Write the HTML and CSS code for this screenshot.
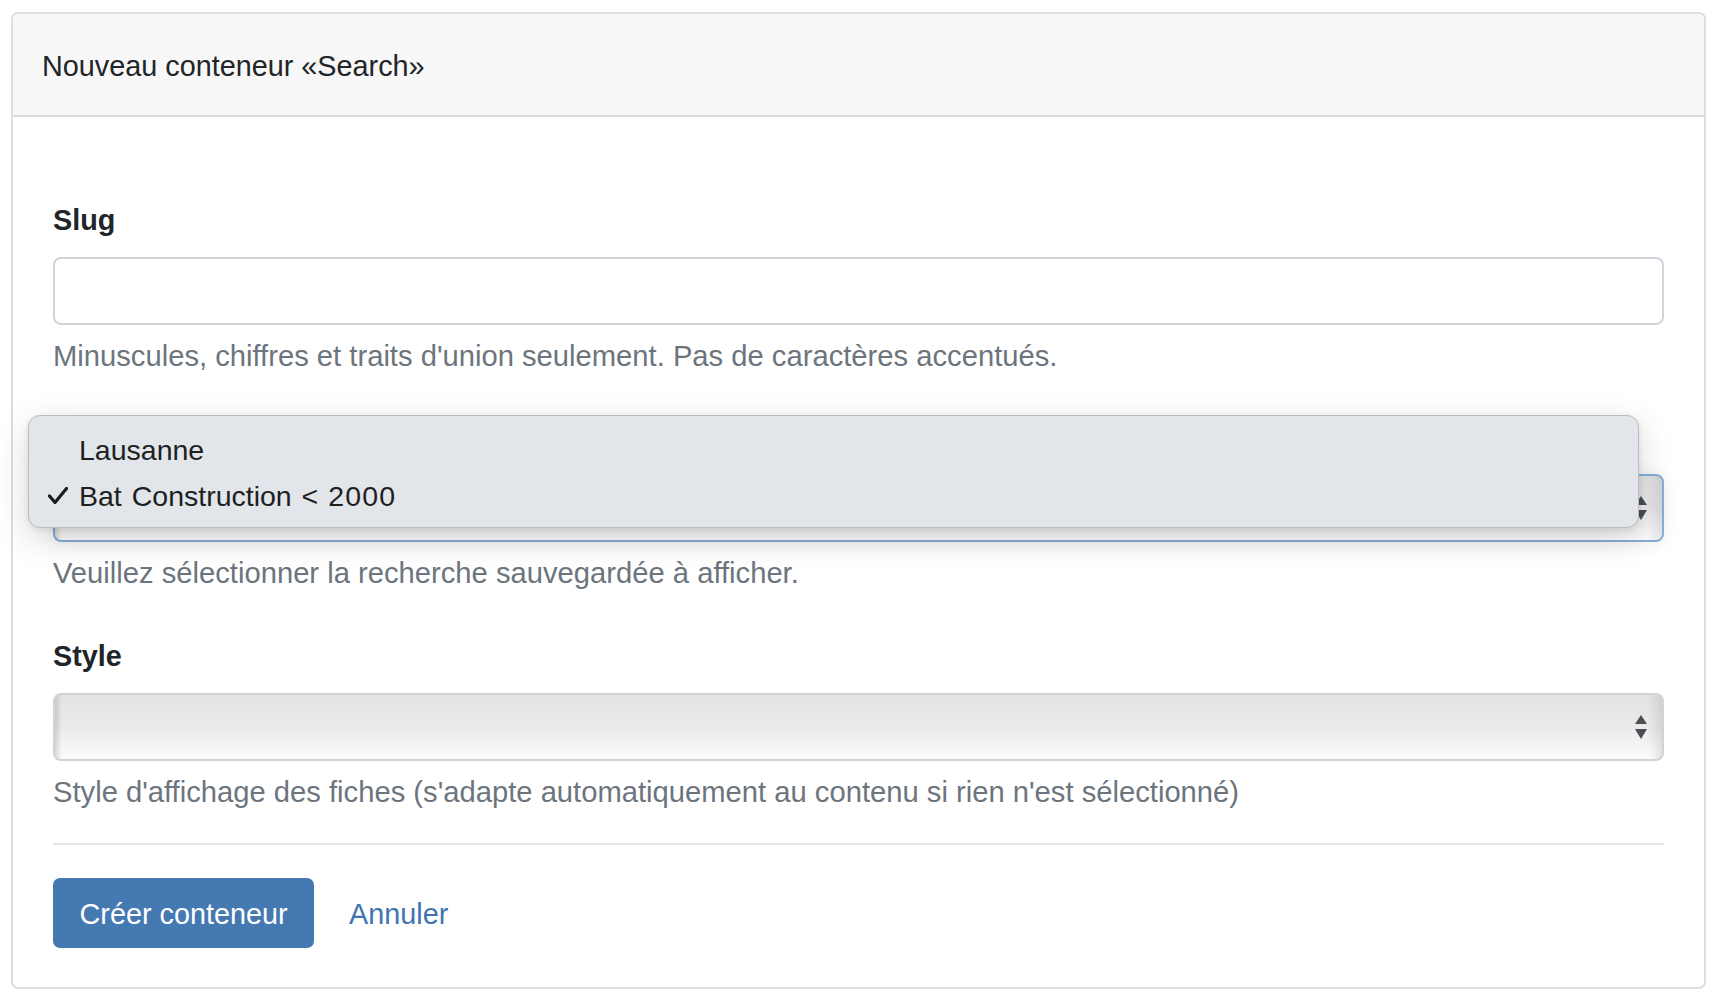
FILE: index.html
```html
<!DOCTYPE html>
<html lang="fr">
<head>
<meta charset="utf-8">
<title>Nouveau conteneur «Search»</title>
<link rel="stylesheet" href="styles.css">
</head>
<body>
<div class="card">
  <div class="card-header">Nouveau conteneur «Search»</div>
  <div class="card-body">
    <form class="form">
      <div class="group">
        <label class="label" for="slug">Slug</label>
        <input class="control" id="slug" type="text">
        <div class="help">Minuscules, chiffres et traits d'union seulement. Pas de caractères accentués.</div>
      </div>

      <div class="group group-mid">
        <label class="label label-covered">Recherche</label>
        <div class="select-wrap">
          <div class="select is-focused">
            <svg class="arrows" width="12" height="24" viewBox="0 0 12 24"><polygon points="6,0 12,9 0,9"/><polygon points="0,14 12,14 6,24"/></svg>
          </div>
          <div class="menu">
            <div class="menu-item"><span class="check"></span><span>Lausanne</span></div>
            <div class="menu-item"><span class="check"><svg width="20" height="17" viewBox="0 0 20 17"><polyline points="1.5,9 7,15.5 18.5,1.5"/></svg></span><span class="item-wide">Bat Construction &lt; <span class="digits">2000</span></span></div>
          </div>
        </div>
        <div class="help">Veuillez sélectionner la recherche sauvegardée à afficher.</div>
      </div>

      <div class="group group-last">
        <label class="label">Style</label>
        <div class="select">
          <svg class="arrows" width="12" height="24" viewBox="0 0 12 24"><polygon points="6,0 12,9 0,9"/><polygon points="0,14 12,14 6,24"/></svg>
        </div>
        <div class="help">Style d'affichage des fiches (s'adapte automatiquement au contenu si rien n'est sélectionné)</div>
      </div>

      <hr class="divider">

      <div class="actions">
        <button class="btn" type="button">Créer conteneur</button>
        <a class="link" href="#">Annuler</a>
      </div>
    </form>
  </div>
</div>
</body>
</html>
```

FILE: styles.css
```css
* { box-sizing: border-box; }

html, body {
  margin: 0;
  padding: 0;
  background: #ffffff;
}

body {
  font-family: "Liberation Sans", Arial, sans-serif;
  font-size: 28.8px;
  line-height: 43.2px;
  color: #212529;
}

.card {
  margin: 12px 16px 15px 11px;
  border: 2px solid #dedede;
  border-radius: 7px;
  background: #ffffff;
}

.card-header {
  background: #f7f7f7;
  border-bottom: 2px solid #dadada;
  border-radius: 5px 5px 0 0;
  padding: 31px 29px 27px;
  color: #212529;
}

.card-body {
  padding: 82px 40px 39px 40px;
}

.form {
  margin: 0;
}

.group {
  margin-bottom: 37.5px;
}

.group-mid {
  margin-bottom: 40px;
}

.group-last {
  margin-bottom: 28px;
}

.label {
  display: block;
  font-weight: 700;
  margin-bottom: 14.4px;
  color: #212529;
}

.label-covered {
  visibility: hidden;
}

.control {
  display: block;
  width: 100%;
  height: 68px;
  margin: 0;
  padding: 0 20px;
  border: 2px solid #cfd4da;
  border-radius: 8px;
  background: #ffffff;
  font: inherit;
  outline: none;
}

.help {
  margin-top: 10.5px;
  font-size: 29.2px;
  color: #6c757d;
}

.select-wrap {
  position: relative;
}

.select {
  display: flex;
  align-items: center;
  justify-content: flex-end;
  height: 68px;
  padding-right: 15px;
  border: 2px solid #cfd4da;
  border-radius: 8px;
  background:
    linear-gradient(to right, rgba(0,0,0,0.13), rgba(0,0,0,0) 7px, rgba(0,0,0,0) calc(100% - 14px), rgba(0,0,0,0.09)),
    linear-gradient(#e3e3e3, #eaeaea 50%, #fcfcfc);
}

.select.is-focused {
  border-color: #87acd6;
  box-shadow: 0 0 18px rgba(0,0,0,0.08);
}

.arrows {
  display: block;
  fill: #4b4e53;
}

.menu {
  position: absolute;
  top: -59px;
  left: -25px;
  width: 100%;
  height: 113px;
  padding: 11px 0 8px;
  background: #e2e5e9;
  border: 1px solid #bcbcbc;
  border-radius: 12px;
  box-shadow: 0 10px 34px rgba(0,0,0,0.16), 0 2px 6px rgba(0,0,0,0.08);
  font-size: 28.5px;
  line-height: 46px;
  color: #1f1f1f;
}

.menu-item {
  display: flex;
  align-items: center;
  padding-left: 19px;
}

.item-wide {
  word-spacing: 2px;
}

.digits {
  letter-spacing: 1.2px;
}

.check {
  display: flex;
  align-items: center;
  width: 31px;
  flex: none;
}

.check svg {
  display: block;
  fill: none;
  stroke: #1c1c1c;
  stroke-width: 3.2;
  stroke-linecap: round;
  stroke-linejoin: round;
}

.divider {
  margin: 0 0 33px;
  border: 0;
  border-top: 2px solid #e6e6e6;
  height: 0;
}

.actions {
  display: flex;
  align-items: baseline;
}

.btn {
  margin: 0;
  padding: 15.6px 26.5px 11.2px;
  border: none;
  border-radius: 7px;
  background: #4579b2;
  color: #ffffff;
  font: inherit;
  line-height: 43.2px;
  cursor: pointer;
}

.link {
  margin-left: 35px;
  color: #3f74b3;
  text-decoration: none;
}
```
